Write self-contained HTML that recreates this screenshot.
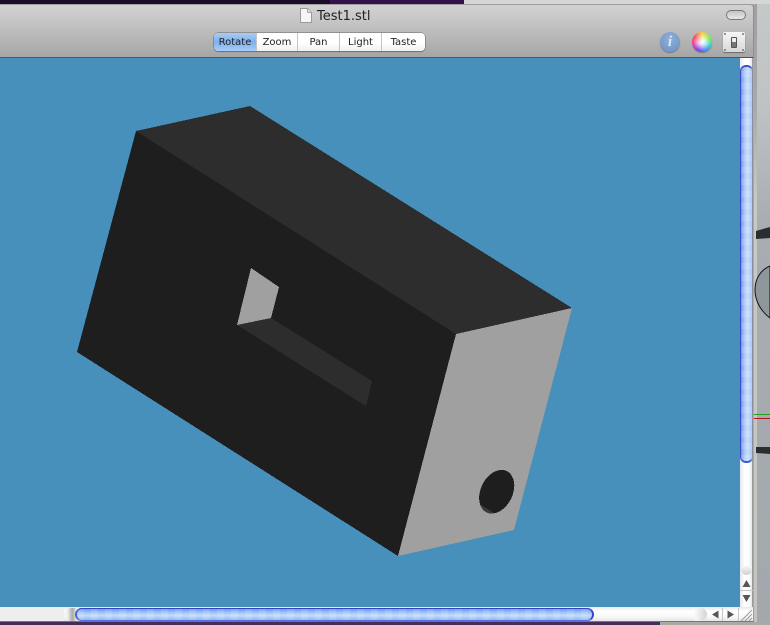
<!DOCTYPE html>
<html><head><meta charset="utf-8"><style>
html,body{margin:0;padding:0}
body{width:770px;height:625px;position:relative;overflow:hidden;background:#a9a9a6;font-family:"DejaVu Sans","Liberation Sans",sans-serif}
div{position:absolute;box-sizing:border-box}
.seg{top:0;height:18px;font-size:10px;line-height:19px;text-align:center;color:#222;border-right:1px solid #c4c4c4}
.d{width:2px;height:2px;background:#777;border-radius:50%}
</style></head><body>
<!-- desktop top -->
<div style="left:0;top:0;width:464px;height:4px;background:#1a0c28"></div>
<div style="left:330px;top:0;width:134px;height:4px;background:#33124a"></div>
<div style="left:464px;top:0;width:306px;height:4px;background:#d6d6d6"></div>
<!-- right background -->
<div style="left:754px;top:4px;width:16px;height:621px;background:linear-gradient(#c4c8c8 0,#bfc3c4 100px,#a8adb2 220px,#a3a8ad 100%)"></div>
<div style="left:754px;top:4px;width:3px;height:621px;background:linear-gradient(#a0a0a0 0,#a8a8a8 100px,#c9c9c4 200px,#c4c4c0 100%)"></div>
<svg style="position:absolute;left:754px;top:200px" width="16" height="270">
<path d="M2 31L16 27V38L2 39Z" fill="#2b2d30"/>
<path d="M16 66C7 70 1 78 1 90C1 102 8 112 16 118V66Z" fill="#8f979c" stroke="#111" stroke-width="1"/>
<rect x="0" y="214" width="16" height="1" fill="#1fa01f"/>
<rect x="0" y="218" width="16" height="1" fill="#b01515"/>
<path d="M2 247L16 247V254L2 253Z" fill="#2b2d30"/>
</svg>
<!-- bottom desktop -->
<div style="left:0;top:622px;width:770px;height:3px;background:#a9a9a6"></div>
<div style="left:0;top:622px;width:660px;height:3px;background:#4a2a58"></div>
<!-- window -->
<div style="left:0;top:4px;width:754px;height:54px;background:linear-gradient(#d2d2d2,#c8c8c8 25%,#a6a6a6);border-top:1px solid #9c9c9c;border-right:1px solid #8e8e8e;border-bottom:1px solid #555;border-top-right-radius:4px"></div>
<svg style="position:absolute;left:299px;top:7px" width="14" height="17"><path d="M1.5 1.5H8.5L12.5 5.5V15.5H1.5Z" fill="#f6f6f6" stroke="#9a9a9a"/><path d="M8.5 1.5V5.5H12.5" fill="#ddd" stroke="#aaa"/></svg>
<div style="left:317px;top:8px;font-size:13px;line-height:17px;color:#222;white-space:nowrap">Test1.stl</div>
<div style="left:726px;top:10px;width:20px;height:10px;border-radius:5px;border:1px solid #777;background:linear-gradient(#c4c4c4,#e8e8e8)"></div>
<!-- segmented -->
<div style="left:214px;top:33px;width:211px;height:18px;border-radius:4px;background:linear-gradient(#fff,#fff 55%,#f0f0f0);box-shadow:0 0 0 .5px #666,0 1px 1px rgba(0,0,0,.3);overflow:hidden">
<div class="seg" style="left:0;width:43px;background:linear-gradient(#a9cbf5,#7fb0ee 50%,#a8cdf6)">Rotate</div>
<div class="seg" style="left:43px;width:41px">Zoom</div>
<div class="seg" style="left:84px;width:42px">Pan</div>
<div class="seg" style="left:126px;width:42px">Light</div>
<div class="seg" style="left:168px;width:43px;border-right:0">Taste</div>
</div>
<!-- toolbar icons -->
<div style="left:660px;top:32px;width:20px;height:20px;border-radius:50%;background:radial-gradient(circle at 50% 35%,#8fb0d8,#6a8fc4);box-shadow:0 1px 1px rgba(0,0,0,.3);color:#dfe8f4;font:italic bold 15px/20px 'Liberation Serif',serif;text-align:center">i</div>
<div style="left:692px;top:32px;width:20px;height:20px;border-radius:50%;background:radial-gradient(circle,#fff 0,rgba(255,255,255,.7) 25%,rgba(255,255,255,0) 62%),conic-gradient(#ffd040,#90e850,#40d8b0,#4090ff,#8040e8,#e840b0,#ff5050,#ffd040);box-shadow:0 1px 1px rgba(0,0,0,.3)"></div>
<div style="left:723px;top:32px;width:22px;height:20px;border-radius:2px;background:linear-gradient(#f6f6f6,#d8d8d8);box-shadow:0 1px 1px rgba(0,0,0,.4)">
<div class="d" style="left:1px;top:1px"></div><div class="d" style="right:1px;top:1px"></div><div class="d" style="left:1px;bottom:1px"></div><div class="d" style="right:1px;bottom:1px"></div>
<div style="left:8px;top:5px;width:6px;height:11px;background:#777;border:1px solid #555;border-radius:1px"></div>
<div style="left:9px;top:6px;width:4px;height:4px;background:#eee"></div>
</div>
<!-- canvas -->
<svg style="position:absolute;left:0;top:58px;display:block" width="740" height="549" viewBox="0 58 740 549" shape-rendering="crispEdges">
<defs><clipPath id="h"><ellipse cx="496.7" cy="491.7" rx="16" ry="23" transform="rotate(26 496.7 491.7)"/></clipPath></defs>
<rect x="0" y="58" width="740" height="549" fill="#4690bb"/>
<polygon points="136,131 250,106 572,308 456,334" fill="#2d2d2d"/>
<polygon points="136,131 456,334 398,556 77,352" fill="#1e1e1e"/>
<polygon points="456,334 572,308 514,530 398,556" fill="#a0a0a0"/>
<polygon points="251,268 279,287 271,318 237,325" fill="#a0a0a0"/>
<polygon points="271,318 372,381 366,406 237,325" fill="#2d2d2d"/>
<ellipse cx="496.7" cy="491.7" rx="16" ry="23" transform="rotate(26 496.7 491.7)" fill="#1e1e1e"/>
<path d="M478 503L494 513L484 518L476 510Z" fill="#3a3a3a" clip-path="url(#h)"/>
</svg>
<!-- vertical scrollbar -->
<div style="left:740px;top:58px;width:13px;height:549px;background:linear-gradient(90deg,#e8e8e8,#fff 40%,#fff 70%,#e8e8e8);border-right:1px solid #999"></div>
<div style="left:740px;top:65px;width:13px;height:398px;border-radius:6px;border-left:1px solid #3c4cc8;border-right:1px solid #8a8fa0;border-top:2px solid #3f4fc0;border-bottom:2px solid #3a58d0;background:repeating-linear-gradient(0deg,rgba(255,255,255,.12) 0 6px,rgba(255,255,255,0) 6px 12px),linear-gradient(90deg,#6c92ec,#a9c8f8 30%,#c8defa 60%,#a8c8f6)"></div>
<div style="left:741px;top:566px;width:11px;height:9px;border-radius:0 0 6px 6px;background:linear-gradient(#f6f6f6,#d0d0d0)"></div>
<div style="left:740px;top:590px;width:13px;height:1px;background:#c8c8c8"></div>
<svg style="position:absolute;left:740px;top:578px" width="13" height="28"><path d="M2.5 9L6.5 2L10.5 9Z" fill="#555"/><path d="M2.5 17L10.5 17L6.5 24Z" fill="#555"/></svg>
<!-- horizontal scrollbar -->
<div style="left:0;top:607px;width:754px;height:15px;background:linear-gradient(#e8e8e8,#fff 30%,#f8f8f8 70%,#e6e6e6);border-bottom:1px solid #777;border-right:1px solid #999"></div>
<div style="left:0;top:608px;width:64px;height:13px;background:#eeeeee"></div>
<div style="left:64px;top:608px;width:12px;height:13px;border-radius:7px 0 0 7px;background:linear-gradient(90deg,#f4f4f4,#f0f0f0 30%,#aaa 70%,#e0e0e0)"></div>
<div style="left:75px;top:608px;width:519px;height:13px;border-radius:7px;border-top:1px solid #3344c0;border-right:2px solid #3344c8;border-left:2px solid #4466d8;border-bottom:1px solid #5570dc;background:repeating-linear-gradient(90deg,rgba(255,255,255,.12) 0 7px,rgba(255,255,255,0) 7px 14px),linear-gradient(#6f9af0,#a6c6f7 35%,#c4dcfa 60%,#8fb6f2)"></div>
<div style="left:695px;top:608px;width:12px;height:13px;border-radius:0 7px 7px 0;background:linear-gradient(90deg,#f8f8f8,#d4d4d4)"></div>
<div style="left:722px;top:608px;width:1px;height:13px;background:#c8c8c8"></div>
<div style="left:738px;top:608px;width:1px;height:13px;background:#c8c8c8"></div>
<svg style="position:absolute;left:708px;top:608px" width="46" height="14"><path d="M10.5 2.5L4 6.5L10.5 10.5Z" fill="#555"/><path d="M19.5 2.5L26 6.5L19.5 10.5Z" fill="#555"/><path d="M33 13L44 2M37 13L44 6M41 13L44 10" stroke="#999" stroke-width="1" fill="none"/></svg>
</body></html>
